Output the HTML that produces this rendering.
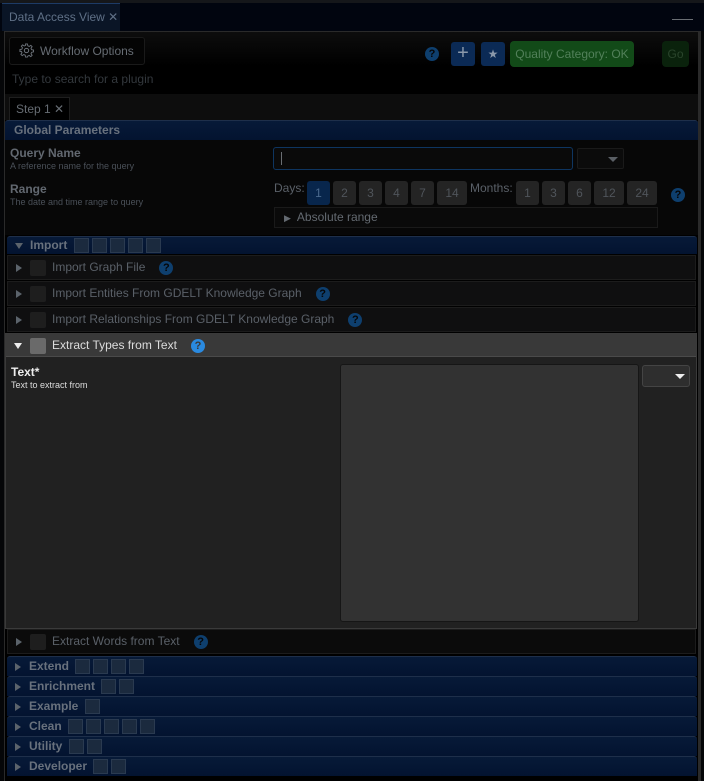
<!DOCTYPE html>
<html><head><meta charset="utf-8"><style>
*{box-sizing:border-box;margin:0;padding:0}
body{width:704px;height:781px;background:#050608;font-family:"Liberation Sans",sans-serif;font-size:12px;position:relative;overflow:hidden;color:#6c727a}
.a{position:absolute}
.btn{position:absolute;background:#242424;border-radius:3px;color:#50555b;text-align:center;line-height:24px;font-size:12px;height:24px}
.hdr{position:absolute;left:7px;width:690px;background:linear-gradient(#071a38,#031330);border-top:1px solid #1e2f4a;border-radius:3px 3px 0 0;color:#68717d;font-weight:bold;font-size:12px}
.sq{display:inline-block;width:15px;height:15px;background:#1b2a3e;border:1px solid #2a3a50;vertical-align:middle;margin-left:3px}
.tri{display:inline-block;width:0;height:0;border-left:6px solid #5b636b;border-top:4px solid transparent;border-bottom:4px solid transparent;margin:0 8px 0 8px;vertical-align:middle}
.row{position:absolute;left:7px;width:689px;height:25px;background:#0f0f10;border:1px solid #1c1c1c;color:#5a6068;font-size:12px;line-height:23px}
.cb{display:inline-block;width:16px;height:16px;background:#1e1e1e;border-radius:2px;vertical-align:middle;margin-right:6px}
.q{display:inline-block;width:14px;height:14px;border-radius:50%;background:#0e3f6e;color:#050608;font-weight:bold;font-size:11px;text-align:center;line-height:14px;vertical-align:middle;margin-left:14px}
</style></head><body>
<div class="a" style="left:0;top:0;width:704px;height:3px;background:#15171a"></div>
<div class="a" style="left:0;top:3px;width:704px;height:28px;background:#01050f"></div>
<div class="a" style="left:2px;top:3px;width:118px;height:28px;background:#0a1526;border-top:1px solid #1d3b66;color:#5f7086;font-size:12px;line-height:27px;padding-left:7px">Data Access View ✕</div>
<div class="a" style="left:672px;top:19px;width:21px;height:1px;background:#6a6e73"></div>
<div class="a" style="left:4px;top:31px;width:697px;height:750px;background:#000;border-left:1px solid #2a2a2a;border-top:1px solid #2a2a2a"></div>
<div class="a" style="left:5px;top:32px;width:693px;height:62px;background:linear-gradient(#0d0d0d,#000 55%)"></div>
<div class="a" style="left:9px;top:37px;width:136px;height:28px;background:#040404;border:1px solid #1a1a1a;border-radius:3px;color:#666c73;font-size:12px;line-height:27px;padding-left:9px">
<svg width="15" height="15" viewBox="0 0 16 16" style="vertical-align:-3px;margin-right:6px"><circle cx="8" cy="8" r="2.3" fill="none" stroke="#6c727a" stroke-width="1.1"/><path d="M7 1h2l.4 2 1.5.7 1.7-1.2 1.4 1.4-1.2 1.7.7 1.5 2 .4v2l-2 .4-.7 1.5 1.2 1.7-1.4 1.4-1.7-1.2-1.5.7L9 15H7l-.4-2-1.5-.7-1.7 1.2-1.4-1.4 1.2-1.7-.7-1.5L1 9V7l2-.4.7-1.5-1.2-1.7 1.4-1.4 1.7 1.2 1.5-.7z" fill="none" stroke="#6c727a" stroke-width="1"/></svg>Workflow Options</div>
<div class="a" style="left:12px;top:72px;color:#33383d;font-size:12px">Type to search for a plugin</div>
<div class="q a" style="left:425px;top:47px;margin:0">?</div>
<div class="a" style="left:451px;top:42px;width:24px;height:24px;background:#0b2a55;border-radius:3px;color:#8a98aa;font-size:20px;text-align:center;line-height:23px">+</div>
<div class="a" style="left:481px;top:42px;width:24px;height:24px;background:#0b2a55;border-radius:3px;color:#8a98aa;font-size:12px;text-align:center;line-height:24px">★</div>
<div class="a" style="left:510px;top:41px;width:124px;height:26px;background:#124a18;border-radius:4px;color:#52805a;font-size:12px;text-align:center;line-height:26px">Quality Category: OK</div>
<div class="a" style="left:662px;top:41px;width:27px;height:26px;background:#0a220c;border-radius:4px;color:#2a452c;font-size:12px;text-align:center;line-height:26px">Go</div>
<div class="a" style="left:5px;top:94px;width:693px;height:26px;background:#0d0d0d"></div>
<div class="a" style="left:9px;top:97px;width:61px;height:23px;background:#000;border:1px solid #1e1e1e;border-bottom:none;color:#666c73;font-size:12px;line-height:22px;padding-left:6px">Step 1 ✕</div>
<div class="hdr" style="left:5px;width:693px;top:120px;height:20px;line-height:19px;padding-left:9px">Global Parameters</div>
<div class="a" style="left:5px;top:140px;width:693px;height:95px;background:#070707"></div>
<div class="a" style="left:10px;top:146px;color:#626870;font-weight:bold;font-size:12px">Query Name</div>
<div class="a" style="left:10px;top:161px;color:#4a5058;font-size:9px">A reference name for the query</div>
<div class="a" style="left:10px;top:182px;color:#626870;font-weight:bold;font-size:12px">Range</div>
<div class="a" style="left:10px;top:197px;color:#4a5058;font-size:9px">The date and time range to query</div>
<div class="a" style="left:273px;top:147px;width:300px;height:23px;background:#0a0a0a;border:1px solid #0e3560;border-radius:3px"><div class="a" style="left:7px;top:4px;width:1px;height:13px;background:#6a6e73"></div></div>
<div class="a" style="left:577px;top:148px;width:47px;height:21px;background:#0b0b0b;border:1px solid #1a1a1a;border-radius:2px"><div class="a" style="left:30px;top:8px;border-top:5px solid #5a5f65;border-left:5px solid transparent;border-right:5px solid transparent"></div></div>
<div class="a" style="left:274px;top:181px;color:#5a6068">Days:</div>
<div class="btn" style="left:307px;top:181px;width:23px;background:#08264c;color:#4b6a8e">1</div>
<div class="btn" style="left:333px;top:181px;width:23px">2</div>
<div class="btn" style="left:359px;top:181px;width:23px">3</div>
<div class="btn" style="left:385px;top:181px;width:23px">4</div>
<div class="btn" style="left:411px;top:181px;width:23px">7</div>
<div class="btn" style="left:437px;top:181px;width:30px">14</div>
<div class="a" style="left:470px;top:181px;color:#5a6068">Months:</div>
<div class="btn" style="left:516px;top:181px;width:23px">1</div>
<div class="btn" style="left:542px;top:181px;width:23px">3</div>
<div class="btn" style="left:568px;top:181px;width:23px">6</div>
<div class="btn" style="left:594px;top:181px;width:30px">12</div>
<div class="btn" style="left:627px;top:181px;width:30px">24</div>
<div class="q a" style="left:671px;top:188px;margin:0">?</div>
<div class="a" style="left:274px;top:207px;width:384px;height:21px;background:#0a0a0a;border:1px solid #1a1a1a;color:#646a71;line-height:19px;padding-left:9px"><span style="font-size:9px;margin-right:6px">▶</span>Absolute range</div>
<div class="hdr" style="top:236px;height:18px;line-height:17px;padding-left:0"><span class="tri" style="border-left:4px solid transparent;border-right:4px solid transparent;border-top:6px solid #5b636b;border-bottom:none;margin-right:7px"></span>Import <span class="sq"></span><span class="sq"></span><span class="sq"></span><span class="sq"></span><span class="sq"></span></div>
<div class="row" style="top:255px"><span class="tri"></span><span class="cb"></span>Import Graph File<span class="q">?</span></div>
<div class="row" style="top:281px"><span class="tri"></span><span class="cb"></span>Import Entities From GDELT Knowledge Graph<span class="q">?</span></div>
<div class="row" style="top:307px"><span class="tri"></span><span class="cb"></span>Import Relationships From GDELT Knowledge Graph<span class="q">?</span></div>
<div class="a" style="left:5px;top:333px;width:692px;height:296px;background:#212121;border:1px solid #3a3a3a"></div>
<div class="a" style="left:6px;top:334px;width:690px;height:23px;background:#393939;border-bottom:1px solid #4a4a4a;color:#dcdcdc;font-size:12px;line-height:22px"><span class="tri" style="border-left:4px solid transparent;border-right:4px solid transparent;border-top:6px solid #eee;border-bottom:none;margin:0 8px"></span><span class="cb" style="background:#6a6a6a"></span>Extract Types from Text<span class="q" style="background:#2a8ae0;color:#393939">?</span></div>
<div class="a" style="left:11px;top:365px;color:#eee;font-weight:bold;font-size:12px">Text*</div>
<div class="a" style="left:11px;top:380px;color:#ddd;font-size:9px">Text to extract from</div>
<div class="a" style="left:340px;top:364px;width:299px;height:258px;background:#323232;border:1px solid #161616;border-radius:3px"></div>
<div class="a" style="left:642px;top:365px;width:48px;height:22px;background:#2e2e2e;border:1px solid #444;border-radius:3px"><div class="a" style="left:32px;top:8px;border-top:5px solid #eee;border-left:5px solid transparent;border-right:5px solid transparent"></div></div>
<div class="row" style="top:629px;background:#0b0b0b"><span class="tri"></span><span class="cb"></span>Extract Words from Text<span class="q">?</span></div>
<div class="hdr" style="top:656px;height:20px;line-height:19px"><span class="tri"></span>Extend <span class="sq"></span><span class="sq"></span><span class="sq"></span><span class="sq"></span></div>
<div class="hdr" style="top:676px;height:20px;line-height:19px"><span class="tri"></span>Enrichment <span class="sq"></span><span class="sq"></span></div>
<div class="hdr" style="top:696px;height:20px;line-height:19px"><span class="tri"></span>Example <span class="sq"></span></div>
<div class="hdr" style="top:716px;height:20px;line-height:19px"><span class="tri"></span>Clean <span class="sq"></span><span class="sq"></span><span class="sq"></span><span class="sq"></span><span class="sq"></span></div>
<div class="hdr" style="top:736px;height:20px;line-height:19px"><span class="tri"></span>Utility <span class="sq"></span><span class="sq"></span></div>
<div class="hdr" style="top:756px;height:20px;line-height:19px"><span class="tri"></span>Developer <span class="sq"></span><span class="sq"></span></div>
<div class="a" style="left:698px;top:31px;width:3px;height:750px;background:#2a2a2a"></div>
</body></html>
